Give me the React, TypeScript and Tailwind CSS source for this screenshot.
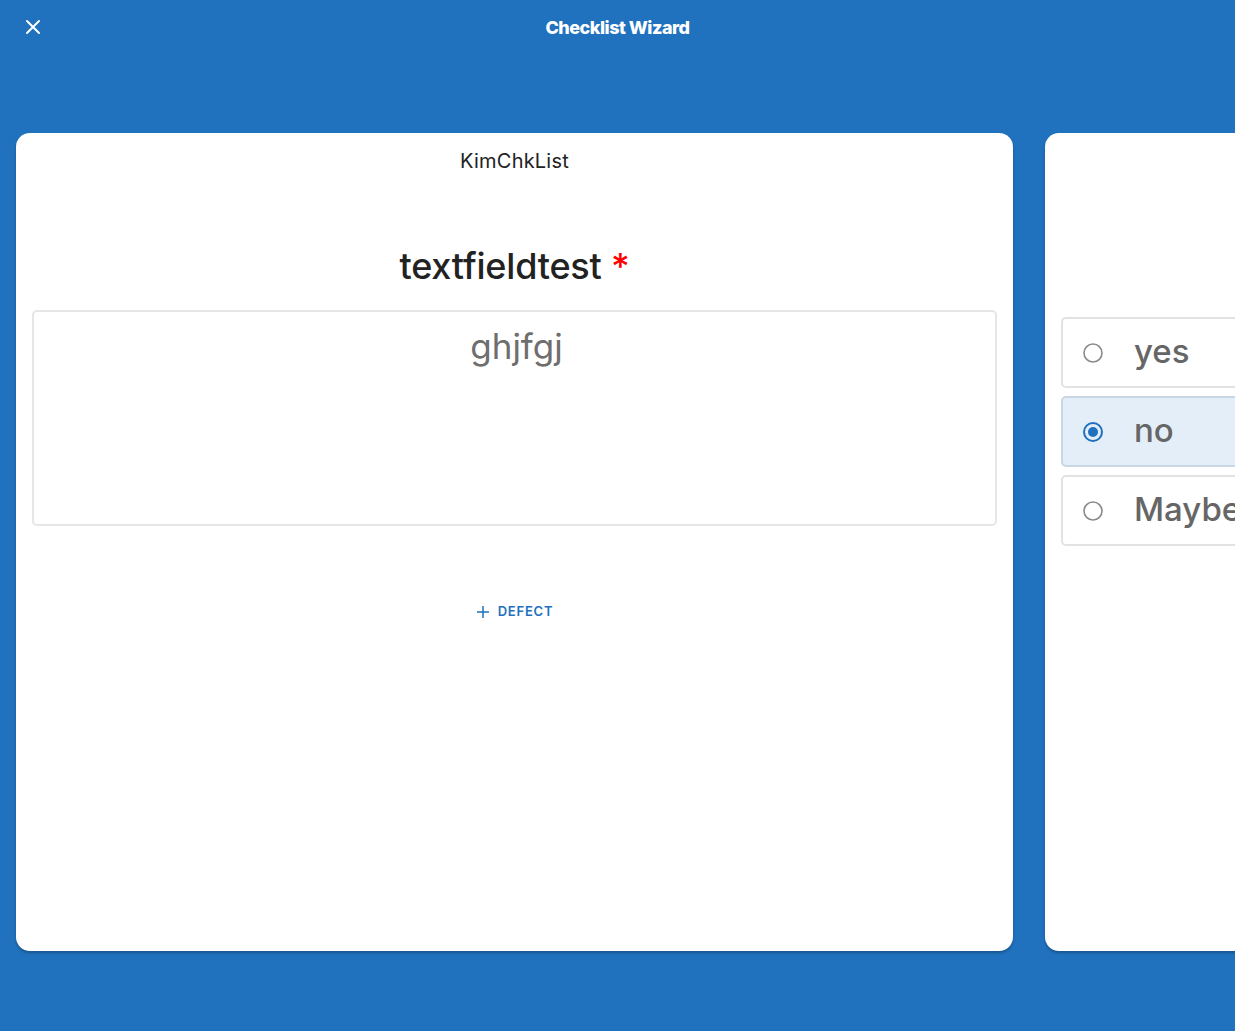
import React from "react";

function Radio({ checked }: { checked?: boolean }) {
  return (
    <svg width="22" height="22" viewBox="0 0 22 22" className="shrink-0">
      {checked ? (
        <>
          <circle cx="11" cy="11" r="9" fill="none" stroke="#1f71bd" strokeWidth="2" />
          <circle cx="11" cy="11" r="5" fill="#1f71bd" />
        </>
      ) : (
        <circle cx="11" cy="11" r="9" fill="none" stroke="#8a8a8a" strokeWidth="1.6" />
      )}
    </svg>
  );
}

function Option({ label, checked }: { label: string; checked?: boolean }) {
  return (
    <div
      className={
        checked
          ? "flex items-center h-[71px] rounded-[5px] border-2 border-[#c9d6e3] bg-[#e4eef9] pl-[19px] gap-[30px]"
          : "flex items-center h-[71px] rounded-[5px] border-2 border-[#e2e2e2] bg-white pl-[19px] gap-[30px]"
      }
    >
      <Radio checked={checked} />
      <span className="text-[33px] text-[#666666] leading-none pb-[2px] font-medium">{label}</span>
    </div>
  );
}

export default function App() {
  return (
    <div
      className="w-[1235px] h-[1031px] overflow-hidden bg-[#2072be] flex flex-col"
      style={{ fontFamily: "Inter, 'Noto Sans', sans-serif" }}
    >
      <div className="relative h-[54px] flex items-center justify-center shrink-0">
        <svg
          width="16"
          height="16"
          viewBox="0 0 16 16"
          className="absolute left-[25px] top-[19px]"
        >
          <path d="M2 2 L14 14 M14 2 L2 14" stroke="white" strokeWidth="2" strokeLinecap="round" />
        </svg>
        <span className="text-white font-extrabold text-[18px] tracking-[-0.5px] mt-[1px]">Checklist Wizard</span>
      </div>
      <div className="flex gap-[32px] pl-[16px] mt-[79px]">
        <div className="w-[997px] h-[818px] shrink-0 bg-white rounded-[14px] shadow-[0_2px_3px_rgba(0,0,0,0.25)] flex flex-col px-[16px]">
          <div className="text-center text-[20px] leading-[28px] text-[#222] mt-[14px] tracking-[0.2px]">KimChkList</div>
          <div className="text-center text-[36px] leading-[44px] text-[#222] mt-[69px] font-medium tracking-[-0.2px]">
            textfieldtest <span className="text-[#ff0000]">*</span>
          </div>
          <div className="mt-[22px] h-[216px] rounded-[5px] border-2 border-[#e6e6e6] flex justify-center pt-[12px]">
            <span className="text-[35px] leading-[44px] text-[#6e6e6e] ml-[4px]">ghjfgj</span>
          </div>
          <div className="mt-[68px] flex justify-center">
            <button className="h-[36px] flex items-center gap-[8px] text-[#1f71bd] text-[13px] font-semibold tracking-[0.8px]">
              <svg width="14" height="14" viewBox="0 0 14 14">
                <path d="M7 1 V13 M1 7 H13" stroke="#1f71bd" strokeWidth="1.5" />
              </svg>
              DEFECT
            </button>
          </div>
        </div>
        <div className="w-[997px] h-[818px] shrink-0 bg-white rounded-[14px] shadow-[0_2px_3px_rgba(0,0,0,0.25)] flex flex-col px-[16px] pt-[184px] gap-[8px]">
          <Option label="yes" />
          <Option label="no" checked />
          <Option label="Maybe" />
        </div>
      </div>
    </div>
  );
}
